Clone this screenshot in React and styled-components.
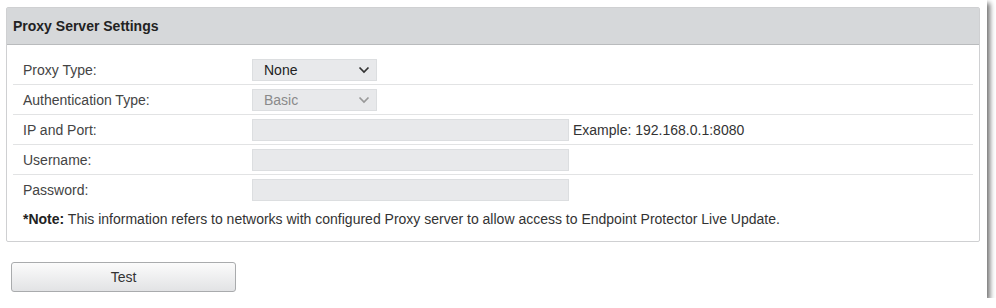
import React from "react";
import styled, { createGlobalStyle } from "styled-components";

const GlobalStyle = createGlobalStyle`
    body {
        margin: 0;
        background: #ffffff;
        font-family: "Liberation Sans", Arial, sans-serif;
        font-size: 14px;
        color: #333333;
    }
`;

const Window = styled.div`
    width: 987px;
    height: 298px;
    box-sizing: border-box;
    padding: 7px 0 0 6px;
    background: #ffffff;
    box-shadow: 3px 3px 5px rgba(0, 0, 0, 0.55);
`;

const Panel = styled.div`
    width: 974px;
    box-sizing: border-box;
    border: 1px solid #cfd0d2;
    border-radius: 2px;
    background: #ffffff;
`;

const PanelHeader = styled.div`
    height: 36px;
    display: flex;
    align-items: center;
    padding-left: 6px;
    background: #d6d8da;
    border-bottom: 1px solid #b9bbbd;
    font-weight: bold;
    font-size: 14px;
    color: #222222;
`;

const Table = styled.div`
    margin: 10px 6px 0 6px;
`;

const Row = styled.div`
    display: grid;
    grid-template-columns: 239px 1fr;
    align-items: center;
    height: 30px;
    box-sizing: border-box;
    border-bottom: ${p => (p.$last ? "none" : "1px solid #e2e3e4")};
`;

const Label = styled.div`
    padding-left: 10px;
    color: #444444;
`;

const Value = styled.div`
    display: flex;
    align-items: center;
    gap: 4px;
`;

const Select = styled.div`
    width: 125px;
    height: 22px;
    box-sizing: border-box;
    display: flex;
    align-items: center;
    justify-content: space-between;
    padding: 0 6px 0 11px;
    background: #e8e9eb;
    border: 1px solid #dcdee0;
    color: ${p => (p.$disabled ? "#8a8a8a" : "#222222")};
`;

const Input = styled.div`
    width: 317px;
    height: 22px;
    box-sizing: border-box;
    background: #e8e9eb;
    border: 1px solid #dcdee0;
`;

const Hint = styled.span`
    color: #333333;
`;

const Note = styled.div`
    height: 36px;
    box-sizing: border-box;
    padding: 6px 0 0 10px;
    line-height: 16px;
    color: #333333;

    b {
        color: #222222;
    }
`;

const Button = styled.button`
    margin: 20px 0 0 5px;
    width: 225px;
    height: 30px;
    border: 1px solid #a9abad;
    border-radius: 3px;
    background: linear-gradient(#fbfbfb, #e2e3e5);
    font-family: "Liberation Sans", Arial, sans-serif;
    font-size: 14px;
    color: #333333;
    cursor: pointer;
`;

const Chevron = ({ color }) => (
    <svg width="12" height="8" viewBox="0 0 12 8">
        <path d="M1.5 1.5 L6 6 L10.5 1.5" fill="none" stroke={color} strokeWidth="1.7" />
    </svg>
);

function App() {
    return (
        <>
            <GlobalStyle />
            <Window>
                <Panel>
                    <PanelHeader>Proxy Server Settings</PanelHeader>
                    <Table>
                        <Row>
                            <Label>Proxy Type:</Label>
                            <Value>
                                <Select>None <Chevron color="#333" /></Select>
                            </Value>
                        </Row>
                        <Row>
                            <Label>Authentication Type:</Label>
                            <Value>
                                <Select $disabled>Basic <Chevron color="#999" /></Select>
                            </Value>
                        </Row>
                        <Row>
                            <Label>IP and Port:</Label>
                            <Value>
                                <Input />
                                <Hint>Example: 192.168.0.1:8080</Hint>
                            </Value>
                        </Row>
                        <Row>
                            <Label>Username:</Label>
                            <Value><Input /></Value>
                        </Row>
                        <Row $last>
                            <Label>Password:</Label>
                            <Value><Input /></Value>
                        </Row>
                        <Note>
                            <b>*Note:</b> This information refers to networks with configured Proxy server to allow access to Endpoint Protector Live Update.
                        </Note>
                    </Table>
                </Panel>
                <Button>Test</Button>
            </Window>
        </>
    );
}

export default App;
